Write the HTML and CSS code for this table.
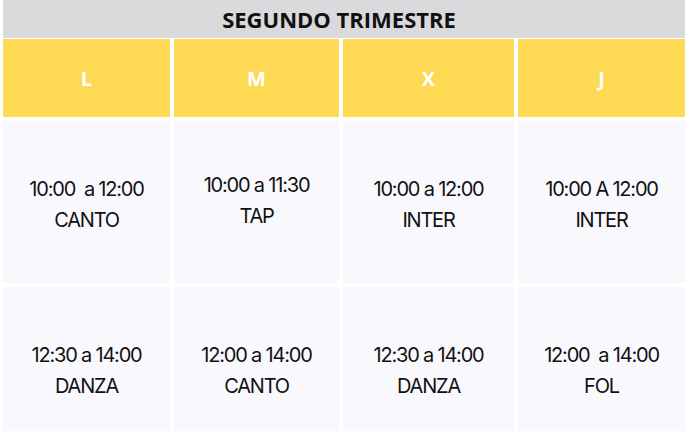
FILE: index.html
```
<!DOCTYPE html>
<html lang="es">
<head>
<meta charset="utf-8">
<title>Segundo Trimestre</title>
<link rel="stylesheet" href="styles.css">
</head>
<body>
<div class="schedule">
  <div class="title">SEGUNDO TRIMESTRE</div>
  <div class="grid">
    <div class="day">L</div>
    <div class="day">M</div>
    <div class="day">X</div>
    <div class="day">J</div>

    <div class="cell"><span>10:00&nbsp; a 12:00</span><span>CANTO</span></div>
    <div class="cell up"><span>10:00 a 11:30</span><span>TAP</span></div>
    <div class="cell"><span>10:00 a 12:00</span><span>INTER</span></div>
    <div class="cell"><span>10:00 A 12:00</span><span>INTER</span></div>

    <div class="cell"><span>12:30 a 14:00</span><span>DANZA</span></div>
    <div class="cell"><span>12:00 a 14:00</span><span>CANTO</span></div>
    <div class="cell"><span>12:30 a 14:00</span><span>DANZA</span></div>
    <div class="cell"><span>12:00&nbsp; a 14:00</span><span>FOL</span></div>
  </div>
</div>
</body>
</html>
```

FILE: styles.css
```
html, body {
  margin: 0;
  padding: 0;
  background: #ffffff;
}

.schedule {
  width: 682px;
  margin-left: 3px;
}

.title {
  height: 38px;
  background: #dadadc;
  color: #111111;
  font-family: "Open Sans", "Liberation Sans", sans-serif;
  font-weight: 700;
  font-size: 22px;
  display: flex;
  align-items: center;
  justify-content: center;
  padding-right: 10px;
}

.grid {
  margin-top: 1px;
  display: grid;
  grid-template-columns: 167px 165px 171px 167px;
  grid-template-rows: 78px 162px 162px;
  gap: 4px;
}

.day {
  background: #fed953;
  color: #ffffff;
  font-family: "Open Sans", "Liberation Sans", sans-serif;
  font-weight: 700;
  font-size: 20px;
  display: flex;
  align-items: center;
  justify-content: center;
}

.cell {
  background: #f9f9fd;
  color: #111111;
  font-family: Inter, "Liberation Sans", sans-serif;
  font-size: 20px;
  letter-spacing: -1.2px;
  line-height: 31px;
  padding-top: 6px;
  display: flex;
  flex-direction: column;
  align-items: center;
  justify-content: center;
}

.cell.up {
  padding-top: 4px;
  padding-bottom: 6px;
}
```
